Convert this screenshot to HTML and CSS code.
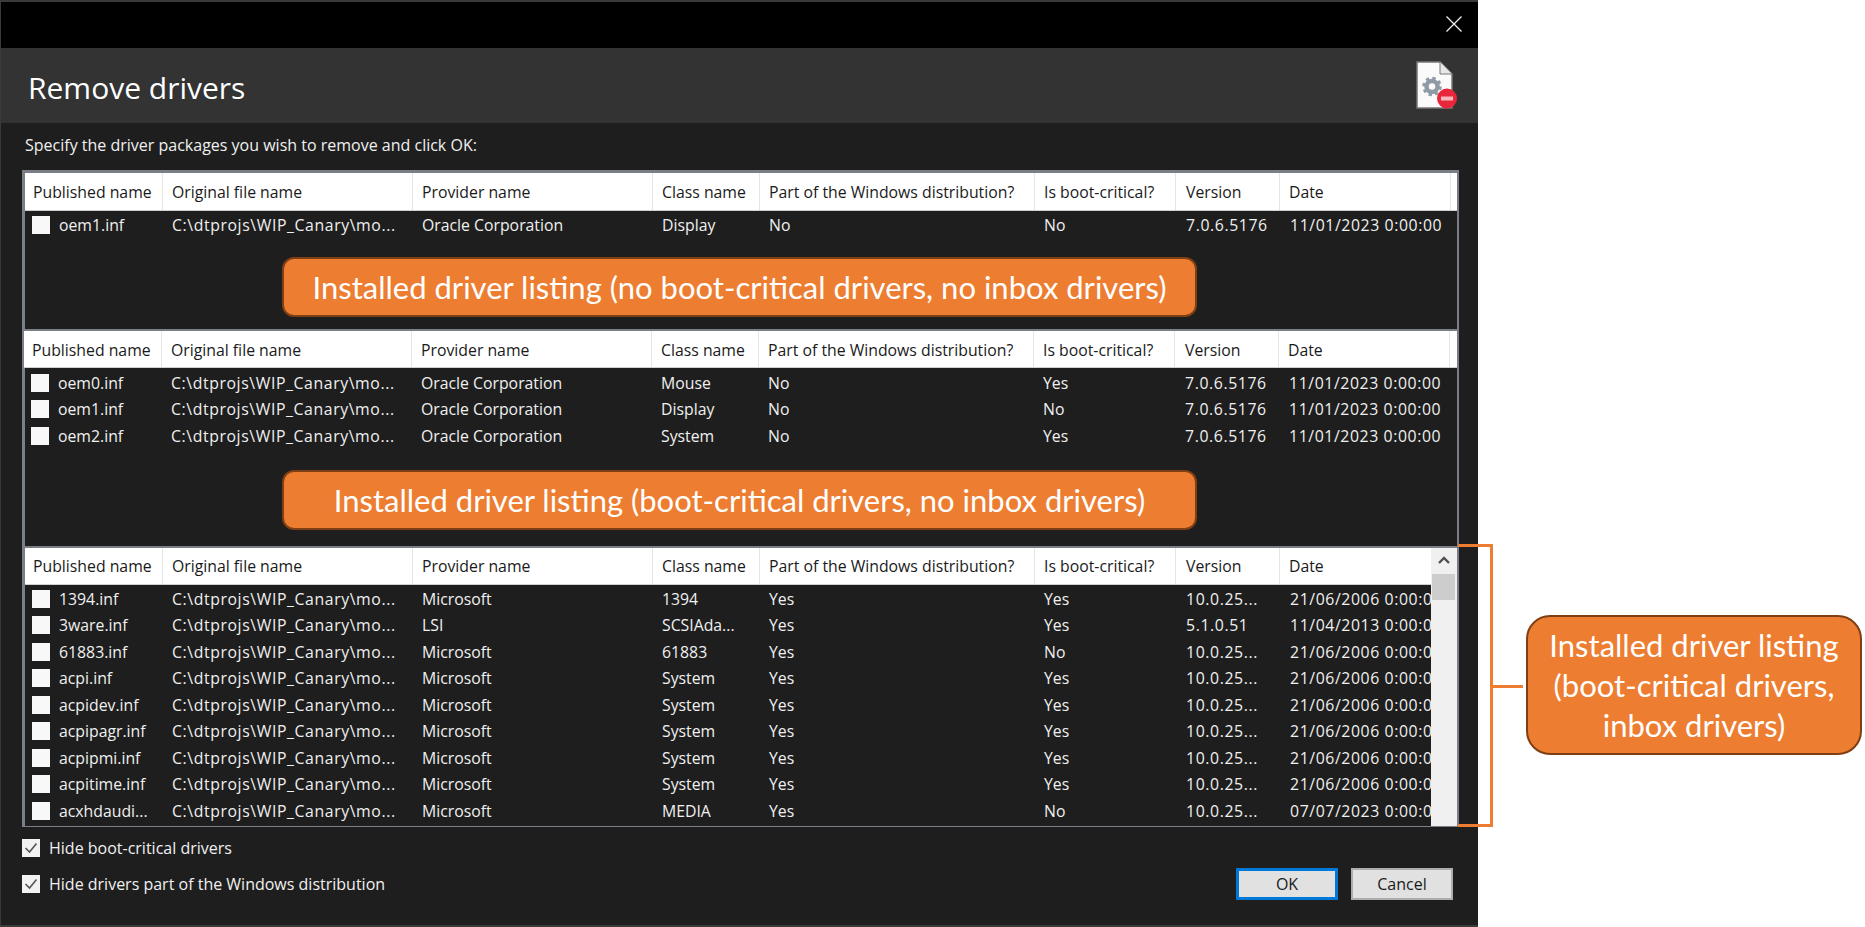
FILE: index.html
```html
<!DOCTYPE html>
<html lang="en">
<head>
    <meta charset="UTF-8">
    <title>Remove drivers</title>
    <link rel="stylesheet" href="styles.css">
</head>
<body>
    <div class="window">
        <div class="titlebar">
            <svg class="close" width="16" height="16" viewBox="0 0 16 16"><path d="M0.5 0.5L15.5 15.5M15.5 0.5L0.5 15.5" stroke="#f0f0f0" stroke-width="1.3" fill="none"/></svg>
        </div>
        <div class="header">
            <h1>Remove drivers</h1>
            <svg class="doc-icon" width="42" height="49" viewBox="0 0 42 49">
                <path d="M1 1H24L36 13V47H1Z" fill="#fafafa" stroke="#777" stroke-width="1.5"/>
                <path d="M24 1V13H36" fill="#e8e8e8" stroke="#777" stroke-width="1"/>
                <circle cx="16" cy="25.5" r="5.5" fill="none" stroke="#8f9aa6" stroke-width="4.5"/>
                <circle cx="16" cy="25.5" r="8" fill="none" stroke="#8f9aa6" stroke-width="3.5" stroke-dasharray="3.2 3.1"/>
                <circle cx="31" cy="37.5" r="10" fill="#e8263c"/>
                <rect x="25" y="35.5" width="12" height="4" fill="#f5b5bc"/>
            </svg>
        </div>
        <div class="content">
            <p class="hint">Specify the driver packages you wish to remove and click OK:</p>

            <div class="frame frame-one">
                <div class="row head">
                    <span>Published name</span><span>Original file name</span><span>Provider name</span><span>Class name</span><span>Part of the Windows distribution?</span><span>Is boot-critical?</span><span>Version</span><span>Date</span>
                </div>
                <div class="row">
                    <span class="name"><i class="box"></i>oem1.inf</span><span>C:\dtprojs\WIP_Canary\mo...</span><span>Oracle Corporation</span><span>Display</span><span>No</span><span>No</span><span>7.0.6.5176</span><span class="date">11/01/2023 0:00:00</span>
                </div>
                <div class="callout callout-wide">Installed driver listing (no boot-critical drivers, no inbox drivers)</div>
            </div>

            <div class="frame frame-two">
                <div class="row head">
                    <span>Published name</span><span>Original file name</span><span>Provider name</span><span>Class name</span><span>Part of the Windows distribution?</span><span>Is boot-critical?</span><span>Version</span><span>Date</span>
                </div>
                <div class="row">
                    <span class="name"><i class="box"></i>oem0.inf</span><span>C:\dtprojs\WIP_Canary\mo...</span><span>Oracle Corporation</span><span>Mouse</span><span>No</span><span>Yes</span><span>7.0.6.5176</span><span class="date">11/01/2023 0:00:00</span>
                </div>
                <div class="row">
                    <span class="name"><i class="box"></i>oem1.inf</span><span>C:\dtprojs\WIP_Canary\mo...</span><span>Oracle Corporation</span><span>Display</span><span>No</span><span>No</span><span>7.0.6.5176</span><span class="date">11/01/2023 0:00:00</span>
                </div>
                <div class="row">
                    <span class="name"><i class="box"></i>oem2.inf</span><span>C:\dtprojs\WIP_Canary\mo...</span><span>Oracle Corporation</span><span>System</span><span>No</span><span>Yes</span><span>7.0.6.5176</span><span class="date">11/01/2023 0:00:00</span>
                </div>
                <div class="callout callout-wide">Installed driver listing (boot-critical drivers, no inbox drivers)</div>
            </div>

            <div class="frame frame-three">
                <div class="list">
                    <div class="row head">
                        <span>Published name</span><span>Original file name</span><span>Provider name</span><span>Class name</span><span>Part of the Windows distribution?</span><span>Is boot-critical?</span><span>Version</span><span>Date</span>
                    </div>
                    <div class="row">
                        <span class="name"><i class="box"></i>1394.inf</span><span>C:\dtprojs\WIP_Canary\mo...</span><span>Microsoft</span><span>1394</span><span>Yes</span><span>Yes</span><span>10.0.25...</span><span class="date">21/06/2006 0:00:00</span>
                    </div>
                    <div class="row">
                        <span class="name"><i class="box"></i>3ware.inf</span><span>C:\dtprojs\WIP_Canary\mo...</span><span>LSI</span><span>SCSIAda...</span><span>Yes</span><span>Yes</span><span>5.1.0.51</span><span class="date">11/04/2013 0:00:00</span>
                    </div>
                    <div class="row">
                        <span class="name"><i class="box"></i>61883.inf</span><span>C:\dtprojs\WIP_Canary\mo...</span><span>Microsoft</span><span>61883</span><span>Yes</span><span>No</span><span>10.0.25...</span><span class="date">21/06/2006 0:00:00</span>
                    </div>
                    <div class="row">
                        <span class="name"><i class="box"></i>acpi.inf</span><span>C:\dtprojs\WIP_Canary\mo...</span><span>Microsoft</span><span>System</span><span>Yes</span><span>Yes</span><span>10.0.25...</span><span class="date">21/06/2006 0:00:00</span>
                    </div>
                    <div class="row">
                        <span class="name"><i class="box"></i>acpidev.inf</span><span>C:\dtprojs\WIP_Canary\mo...</span><span>Microsoft</span><span>System</span><span>Yes</span><span>Yes</span><span>10.0.25...</span><span class="date">21/06/2006 0:00:00</span>
                    </div>
                    <div class="row">
                        <span class="name"><i class="box"></i>acpipagr.inf</span><span>C:\dtprojs\WIP_Canary\mo...</span><span>Microsoft</span><span>System</span><span>Yes</span><span>Yes</span><span>10.0.25...</span><span class="date">21/06/2006 0:00:00</span>
                    </div>
                    <div class="row">
                        <span class="name"><i class="box"></i>acpipmi.inf</span><span>C:\dtprojs\WIP_Canary\mo...</span><span>Microsoft</span><span>System</span><span>Yes</span><span>Yes</span><span>10.0.25...</span><span class="date">21/06/2006 0:00:00</span>
                    </div>
                    <div class="row">
                        <span class="name"><i class="box"></i>acpitime.inf</span><span>C:\dtprojs\WIP_Canary\mo...</span><span>Microsoft</span><span>System</span><span>Yes</span><span>Yes</span><span>10.0.25...</span><span class="date">21/06/2006 0:00:00</span>
                    </div>
                    <div class="row">
                        <span class="name"><i class="box"></i>acxhdaudi...</span><span>C:\dtprojs\WIP_Canary\mo...</span><span>Microsoft</span><span>MEDIA</span><span>Yes</span><span>No</span><span>10.0.25...</span><span class="date">07/07/2023 0:00:00</span>
                    </div>
                </div>
                <div class="scrollbar">
                    <svg class="arrow" width="12" height="8" viewBox="0 0 12 8"><path d="M1 7L6 2L11 7" stroke="#505050" stroke-width="2.4" fill="none"/></svg>
                    <div class="thumb"></div>
                </div>
            </div>

            <div class="footer">
                <div class="options">
                    <label class="option"><svg class="check" width="18" height="18" viewBox="0 0 18 18"><rect width="18" height="18" fill="#f2f2f2"/><path d="M3.5 9L7.5 13L14.5 4.5" stroke="#555" stroke-width="1.6" fill="none"/></svg>Hide boot-critical drivers</label>
                    <label class="option"><svg class="check" width="18" height="18" viewBox="0 0 18 18"><rect width="18" height="18" fill="#f2f2f2"/><path d="M3.5 9L7.5 13L14.5 4.5" stroke="#555" stroke-width="1.6" fill="none"/></svg>Hide drivers part of the Windows distribution</label>
                </div>
                <div class="buttons">
                    <button type="button" class="btn btn-default">OK</button>
                    <button type="button" class="btn">Cancel</button>
                </div>
            </div>
        </div>

        <!-- note pointing at the third list -->
        <div class="bracket"></div>
        <div class="note">Installed driver listing (boot-critical drivers, inbox drivers)</div>
    </div>
</body>
</html>
```

FILE: styles.css
```css
* {
    box-sizing: border-box;
}
body {
    margin: 0;
    background-color: #fff;
    font-family: "Open Sans", sans-serif;
    font-size: 15.8px;
    overflow: hidden;
}
.window {
    position: relative;
    width: 1478px;
    height: 927px;
    background-color: #1e1e1e;
    border: 2px solid #3a3a3a;
    border-width: 2px 0 2px 1px;
    color: #f0f0f0;
}
.titlebar {
    display: flex;
    justify-content: flex-end;
    align-items: center;
    height: 46px;
    padding: 0 16px 2px 0;
    background-color: #000;
}
.header {
    display: flex;
    justify-content: space-between;
    align-items: center;
    height: 75px;
    padding: 0 20px 0 27px;
    background-color: #333;
}
.header h1 {
    margin: 0;
    padding-top: 3px;
    font-size: 30px;
    font-weight: 400;
    color: #fff;
}
.content {
    padding: 0 20px 0 21px;
}
.hint {
    height: 47px;
    margin: 0;
    padding: 12px 0 0 3px;
    line-height: 20px;
    font-size: 16px;
}
.frame {
    border: 1px solid #7a7f87;
    border-width: 2px 2px 0 3px;
    width: 1437px;
}
.frame-one {
    height: 159px;
    border-top-width: 3px;
}
.frame-two {
    height: 217px;
}
.frame-three {
    display: flex;
    height: 281px;
    border-bottom-width: 1px;
}
.list {
    flex: 1;
    min-width: 0;
    overflow: hidden;
}
.row {
    display: grid;
    grid-template-columns: 138px 250px 240px 107px 275px 141px 104px 171px 1fr;
    align-items: center;
    height: 26.5px;
    padding-top: 1px;
    white-space: nowrap;
}
.frame-two .row {
    margin-left: -1px;
}
.row span {
    padding-left: 9px;
    overflow: hidden;
}
.row span:nth-child(7) {
    padding-left: 10px;
}
.row .name {
    display: flex;
    align-items: center;
    padding-left: 7px;
}
.row .date {
    padding-left: 10px;
}
/* digits and the path run wider than the rest of the list font */
.row:not(.head) span:nth-child(2),
.row:not(.head) span:nth-child(7),
.row:not(.head) span:nth-child(8) {
    letter-spacing: 0.6px;
}
.head {
    height: 37px;
    padding-top: 0;
    background-color: #fff;
    color: #1a1a1a;
    border-bottom: 1px solid #d0d0d0;
}
.head span {
    height: 100%;
    line-height: 37px;
    border-right: 1px solid #e5e5e5;
}
.head span:first-child {
    padding-left: 8px;
}
.frame-one .head {
    height: 38px;
}
.frame-one .head span,
.frame-two .head span {
    line-height: 39px;
}
.frame-two .head {
    margin-bottom: 1px;
}
.box {
    flex: none;
    width: 18px;
    height: 18px;
    margin-right: 9px;
    background-color: #f8f8f8;
}
.callout {
    display: flex;
    justify-content: center;
    align-items: center;
    width: 915px;
    height: 60px;
    background-color: #ed7d31;
    border: 2px solid #7f3f14;
    border-radius: 12px;
    color: #fff;
    font-family: Lato, sans-serif;
    font-size: 31px;
}
.callout-wide {
    margin-left: 257px;
    margin-top: 19px;
}
.frame-two .callout-wide {
    margin-top: 21px;
}
.scrollbar {
    flex: none;
    position: relative;
    width: 26px;
    background-color: #f0f0f0;
}
.arrow {
    position: absolute;
    top: 8px;
    left: 7px;
}
.thumb {
    margin: 26px 2px 0 1px;
    height: 26px;
    background-color: #cdcdcd;
}
.footer {
    display: flex;
    justify-content: space-between;
    padding-top: 3px;
}
.option {
    display: flex;
    align-items: center;
    height: 36px;
    font-size: 16px;
}
.check {
    margin-right: 9px;
}
.buttons {
    display: flex;
    gap: 13px;
    margin: 38px 5px 0 0;
}
.btn {
    width: 102px;
    height: 32px;
    padding: 0;
    background-color: #e1e1e1;
    border: 2px solid #adadad;
    color: #1a1a1a;
    font-family: "Open Sans", sans-serif;
    font-size: 16px;
}
.btn-default {
    border: 3px solid #0078d7;
}
.bracket {
    position: absolute;
    left: 1457px;
    top: 542px;
    width: 35px;
    height: 283px;
    border: 3px solid #ed7d31;
    border-left: none;
}
.bracket::after {
    content: "";
    position: absolute;
    left: 100%;
    top: 138px;
    width: 33px;
    height: 3px;
    background-color: #ed7d31;
}
.note {
    position: absolute;
    left: 1525px;
    top: 613px;
    width: 336px;
    height: 140px;
    padding: 0 10px;
    display: flex;
    align-items: center;
    text-align: center;
    background-color: #ed7d31;
    border: 2px solid #7f3f14;
    border-radius: 24px;
    color: #fff;
    font-family: Lato, sans-serif;
    font-size: 31px;
    line-height: 40px;
}
```
